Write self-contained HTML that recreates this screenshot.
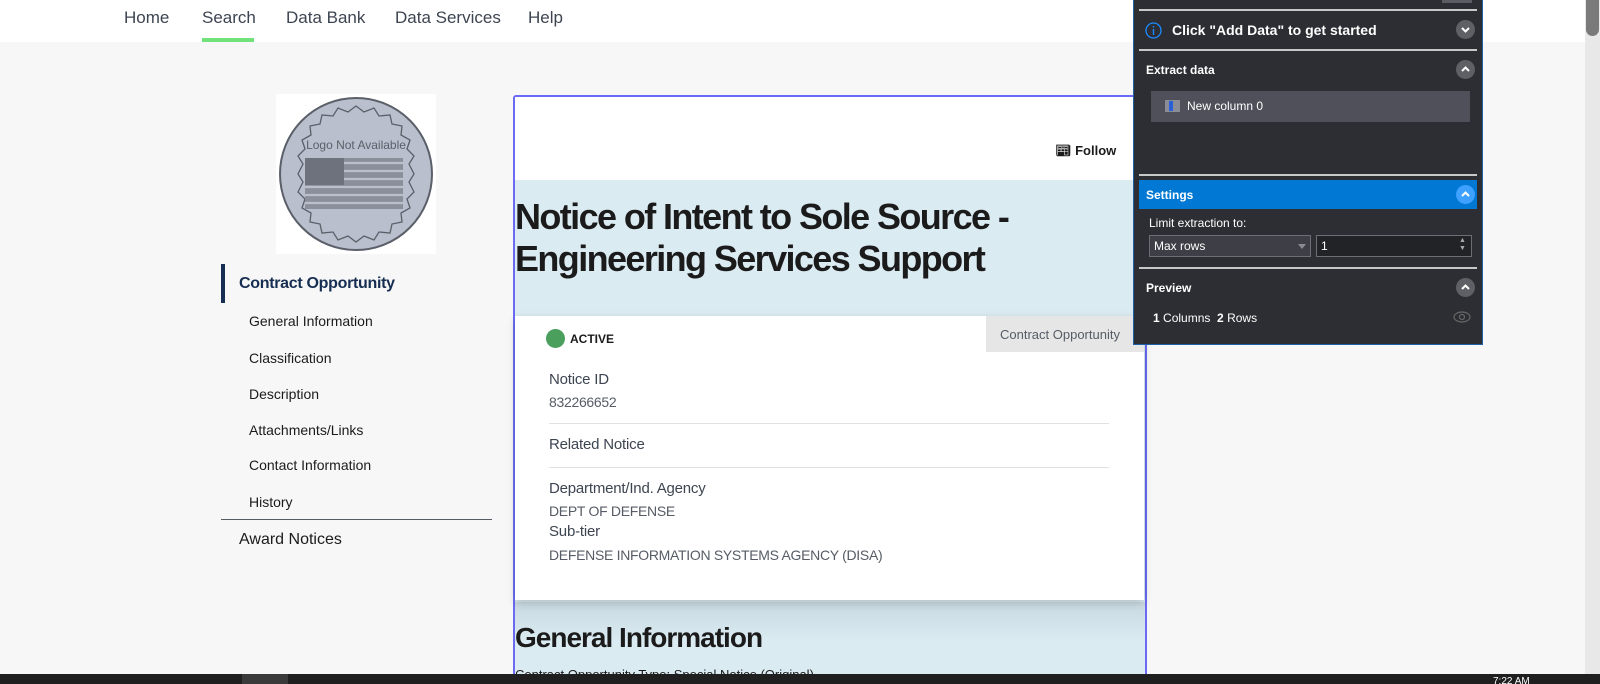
<!DOCTYPE html>
<html><head><meta charset="utf-8"><style>
*{margin:0;padding:0;box-sizing:border-box}
html,body{width:1600px;height:684px;overflow:hidden}
body{background:#f7f7f7;font-family:"Liberation Sans",sans-serif;position:relative;color:#1b1b1b}
.a{position:absolute;white-space:nowrap}
.nav{left:0;top:0;width:1585px;height:42px;background:#fff}
.ni{font-size:17px;color:#3d4551;top:8px}
.sn{font-size:14px;color:#1b1b1b;left:249px}
.lbl{font-size:15px;color:#3d4551;left:549px;letter-spacing:-.2px}
.val{font-size:14px;color:#565c65;left:549px;letter-spacing:-.3px}
.hr{left:549px;width:560px;height:1px;background:#dfe1e2}
.pl{left:1139px;width:338px;height:2px;background:#c8c8c8}
.pt{color:#fff;font-size:12px;font-weight:bold;left:1146px}
.cb{left:1456px}
</style></head><body>
<div class="a nav"></div>
<div class="a ni" style="left:124px">Home</div>
<div class="a ni" style="left:202px">Search</div>
<div class="a" style="left:202px;top:38px;width:52px;height:4px;background:#70e17b"></div>
<div class="a ni" style="left:286px">Data Bank</div>
<div class="a ni" style="left:395px">Data Services</div>
<div class="a ni" style="left:528px">Help</div>

<!-- logo -->
<div class="a" style="left:276px;top:94px;width:160px;height:160px;background:#fff"></div>
<svg class="a" style="left:278px;top:96px" width="156" height="156" viewBox="0 0 156 156">
<circle cx="78" cy="78" r="76" fill="#b9bfcc" stroke="#5b5f69" stroke-width="2"/>
<polygon fill="none" stroke="#5b5f69" stroke-width="1.3" points="78,10 86,16 96,12 101,20 112,19 114,28 124,30 123,39 132,44 129,53 136,60 131,68 136,78 131,86 136,96 129,103 132,112 123,117 124,126 114,128 112,137 101,136 96,144 86,140 78,146 70,140 60,144 55,136 44,137 42,128 32,126 33,117 24,112 27,103 20,96 25,86 20,78 25,68 20,60 27,53 24,44 33,39 32,30 42,28 44,19 55,20 60,12 70,16"/>
<text x="78" y="53" text-anchor="middle" font-size="12" fill="#5b5f69" font-family="Liberation Sans">Logo Not Available</text>
<rect x="27" y="62" width="98" height="51" fill="#8a8f9a"/>
<g stroke="#b9bfcc" stroke-width="2.2"><line x1="66" y1="67" x2="125" y2="67"/><line x1="66" y1="75" x2="125" y2="75"/><line x1="66" y1="83" x2="125" y2="83"/><line x1="27" y1="91" x2="125" y2="91"/><line x1="27" y1="99" x2="125" y2="99"/><line x1="27" y1="107" x2="125" y2="107"/></g>
<rect x="27" y="62" width="39" height="27" fill="#6d727d"/>
</svg>

<div class="a" style="left:221px;top:264px;width:4px;height:39px;background:#162e51"></div>
<div class="a" style="left:239px;top:275px;font-size:16px;font-weight:bold;letter-spacing:-.3px;color:#162e51">Contract Opportunity</div>
<div class="a sn" style="top:313px">General Information</div>
<div class="a sn" style="top:350px">Classification</div>
<div class="a sn" style="top:386px">Description</div>
<div class="a sn" style="top:422px">Attachments/Links</div>
<div class="a sn" style="top:457px">Contact Information</div>
<div class="a sn" style="top:494px">History</div>
<div class="a" style="left:221px;top:519px;width:271px;height:1px;background:#565c65"></div>
<div class="a" style="left:239px;top:531px;font-size:16px;color:#1b1b1b">Award Notices</div>

<!-- main -->
<div class="a" style="left:513px;top:95px;width:634px;height:590px;border:2px solid #6a6af5;border-bottom:none;border-radius:3px 3px 0 0;background:#dbebf2;overflow:hidden">
 <div class="a" style="left:0;top:0;width:630px;height:83px;background:#fff"></div>
 <div class="a" style="left:0;top:505px;width:630px;height:40px;background:linear-gradient(#c9d9e1,#dbebf2)"></div>
</div>
<div class="a" style="left:1055px;top:143px;font-size:13px;font-weight:bold;color:#1b1b1b">&#x1F4F0;&#xFE0E; Follow</div>
<div class="a" style="left:515px;top:196px;font-size:36px;font-weight:bold;line-height:42px;letter-spacing:-1.6px;color:#1b1b1b">Notice of Intent to Sole Source -<br>Engineering Services Support</div>
<div class="a" style="left:515px;top:316px;width:629px;height:284px;background:#fff;box-shadow:0 3px 8px rgba(0,0,0,.18)"></div>
<div class="a" style="left:986px;top:316px;width:158px;height:36px;background:#e6e6e6"></div>
<div class="a" style="left:1000px;top:327px;font-size:13px;color:#565c65">Contract Opportunity</div>
<div class="a" style="left:546px;top:329px;width:19px;height:19px;border-radius:50%;background:#4a9f5c"></div>
<div class="a" style="left:570px;top:332px;font-size:12px;font-weight:bold;color:#1b1b1b">ACTIVE</div>
<div class="a lbl" style="top:371px">Notice ID</div>
<div class="a val" style="top:394px">832266652</div>
<div class="a hr" style="top:423px"></div>
<div class="a lbl" style="top:436px">Related Notice</div>
<div class="a hr" style="top:467px"></div>
<div class="a lbl" style="top:480px">Department/Ind. Agency</div>
<div class="a val" style="top:503px">DEPT OF DEFENSE</div>
<div class="a lbl" style="top:523px">Sub-tier</div>
<div class="a val" style="top:547px">DEFENSE INFORMATION SYSTEMS AGENCY (DISA)</div>
<div class="a" style="left:515px;top:622px;font-size:28px;font-weight:bold;letter-spacing:-1px;color:#1b1b1b">General Information</div>
<div class="a" style="left:515px;top:667px;font-size:13px;color:#1b1b1b">Contract Opportunity Type: Special Notice (Original)</div>

<!-- scrollbar -->
<div class="a" style="left:1585px;top:0;width:15px;height:684px;background:#e8e8e8"></div>
<div class="a" style="left:1586px;top:0;width:13px;height:36px;background:#7a7a7a;border-radius:0 0 7px 7px"></div>

<!-- panel -->
<div class="a" style="left:1133px;top:0;width:350px;height:345px;background:#2d2e33;border:1px solid #1f5fa8;border-top:none"></div>
<div class="a" style="left:1442px;top:0;width:30px;height:3px;background:#5a5b63"></div>
<div class="a pl" style="top:9px"></div>
<svg class="a" style="left:1145px;top:22px" width="17" height="17"><circle cx="8.5" cy="8.5" r="7.5" fill="none" stroke="#1a8cff" stroke-width="1.3"/><rect x="7.8" y="7" width="1.4" height="6" fill="#1a8cff"/><rect x="7.8" y="4" width="1.4" height="1.5" fill="#1a8cff"/></svg>
<div class="a" style="left:1172px;top:22px;font-size:14px;font-weight:bold;color:#fff">Click "Add Data" to get started</div>
<svg class="a cb" style="top:20px" width="19" height="19"><circle cx="9.5" cy="9.5" r="9.5" fill="#5f6066"/><path d="M6 8 L9.5 11.5 L13 8" fill="none" stroke="#fff" stroke-width="2"/></svg>
<div class="a pl" style="top:49px"></div>
<div class="a pt" style="top:63px">Extract data</div>
<svg class="a cb" style="top:60px" width="19" height="19"><circle cx="9.5" cy="9.5" r="9.5" fill="#5f6066"/><path d="M6 11 L9.5 7.5 L13 11" fill="none" stroke="#fff" stroke-width="2"/></svg>
<div class="a" style="left:1151px;top:91px;width:319px;height:31px;background:#4f5059"></div>
<div class="a" style="left:1165px;top:100px;width:15px;height:12px;border:1px solid #8a8c96;background:linear-gradient(90deg,#8a8c96 0 3px,#2b5fd8 3px 7px,#8a8c96 7px)"></div>
<div class="a" style="left:1187px;top:99px;font-size:12px;color:#fff">New column 0</div>
<div class="a pl" style="top:174px"></div>
<div class="a" style="left:1139px;top:180px;width:338px;height:29px;background:#0078d4"></div>
<div class="a pt" style="top:188px">Settings</div>
<svg class="a cb" style="top:185px" width="19" height="19"><circle cx="9.5" cy="9.5" r="9.5" fill="#3ea0ff"/><path d="M6 11 L9.5 7.5 L13 11" fill="none" stroke="#fff" stroke-width="2"/></svg>
<div class="a" style="left:1149px;top:216px;font-size:12px;color:#fff">Limit extraction to:</div>
<div class="a" style="left:1149px;top:235px;width:162px;height:22px;background:#3e3f46;border:1px solid #6c6d75"></div>
<div class="a" style="left:1154px;top:239px;font-size:12px;color:#fff">Max rows</div>
<div class="a" style="left:1298px;top:244px;border:4px solid transparent;border-top:5px solid #8a8b93"></div>
<div class="a" style="left:1316px;top:235px;width:156px;height:22px;background:#222326;border:1px solid #6c6d75"></div>
<div class="a" style="left:1321px;top:239px;font-size:12px;color:#fff">1</div>
<div class="a" style="left:1459px;top:237px;font-size:7px;color:#aaa;line-height:8px">▲<br>▼</div>
<div class="a pl" style="top:267px"></div>
<div class="a pt" style="top:281px">Preview</div>
<svg class="a cb" style="top:278px" width="19" height="19"><circle cx="9.5" cy="9.5" r="9.5" fill="#5f6066"/><path d="M6 11 L9.5 7.5 L13 11" fill="none" stroke="#fff" stroke-width="2"/></svg>
<div class="a" style="left:1153px;top:311px;font-size:12px;color:#fff"><b>1</b> Columns &nbsp;<b>2</b> Rows</div>
<svg class="a" style="left:1453px;top:311px" width="18" height="12"><ellipse cx="9" cy="6" rx="8" ry="5" fill="none" stroke="#666" stroke-width="1.2"/><circle cx="9" cy="6" r="2.5" fill="none" stroke="#666" stroke-width="1.2"/></svg>

<!-- taskbar -->
<div class="a" style="left:0;top:674px;width:1600px;height:20px;background:#1f1f1f"></div>
<div class="a" style="left:242px;top:674px;width:46px;height:20px;background:#3a3a3a"></div>
<div class="a" style="left:1493px;top:676px;font-size:10px;color:#fff">7:22 AM</div>
</body></html>
